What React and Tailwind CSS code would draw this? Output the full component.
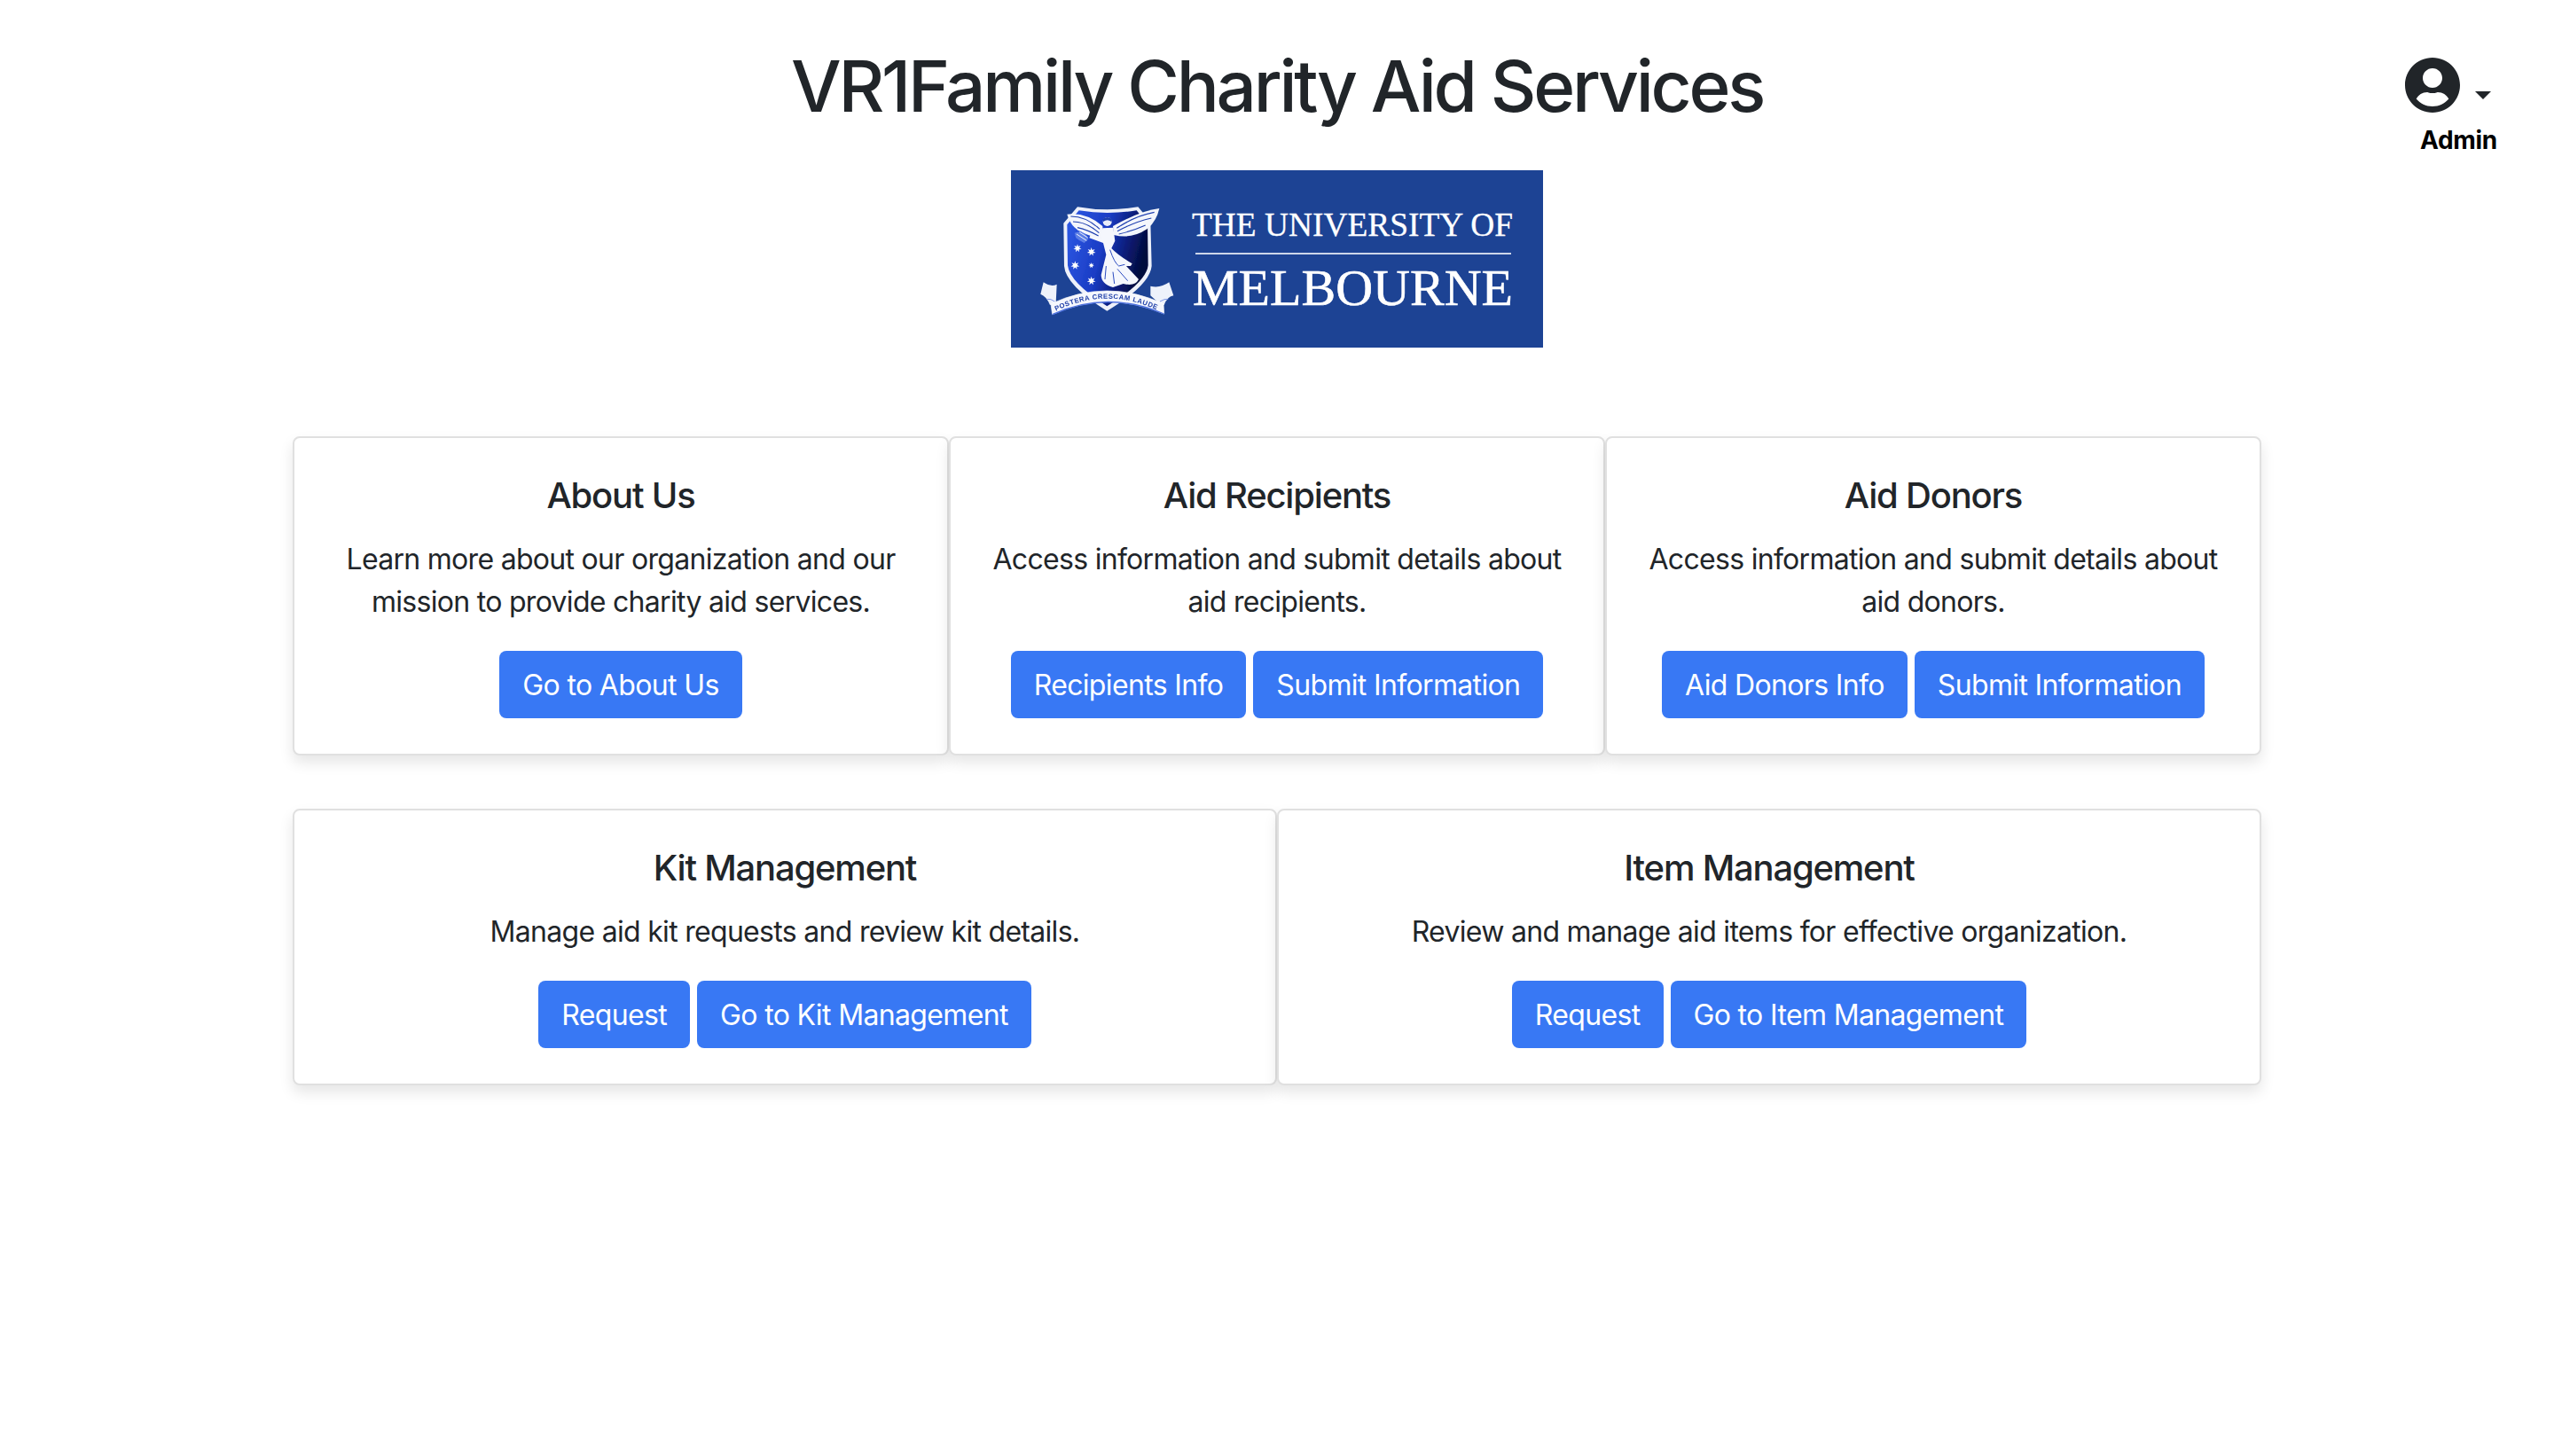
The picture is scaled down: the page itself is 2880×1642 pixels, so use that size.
import React from "react";
import { FaUserCircle } from "react-icons/fa";

const font = "font-['Inter','Liberation_Sans',sans-serif]";

function Btn({ children }) {
  return (
    <span className="inline-block h-[76px] rounded-lg bg-[#3878f4] px-[26px] pt-[1px] text-[32px] leading-[76px] tracking-[-0.65px] whitespace-nowrap text-white">
      {children}
    </span>
  );
}

function Card({ title, lines, buttons }) {
  return (
    <div className="rounded-lg border-2 border-[#e0e0e0] bg-white px-[30px] pt-[41px] pb-[40px] text-center text-[#212529] shadow-[0_8px_16px_rgba(0,0,0,0.1)]">
      <h5 className="text-[40px] leading-[48px] font-medium tracking-[-1.2px]">{title}</h5>
      <div className="mt-[24px] text-[32px] leading-[48px] tracking-[-0.7px]">
        {lines.map((l) => (
          <p key={l}>{l}</p>
        ))}
      </div>
      <div className="mt-[31px] flex justify-center gap-[8px]">
        {buttons.map((b) => (
          <Btn key={b}>{b}</Btn>
        ))}
      </div>
    </div>
  );
}

function Star({ x, y, r }) {
  const pts = [];
  for (let i = 0; i < 14; i++) {
    const a = (Math.PI * i) / 7 - Math.PI / 2;
    const rr = i % 2 === 0 ? r : r * 0.45;
    pts.push(`${x + rr * Math.cos(a)},${y + rr * Math.sin(a)}`);
  }
  return <polygon points={pts.join(" ")} fill="#fff" />;
}

function Crest() {
  return (
    <g transform="translate(20 8) scale(0.33333)" filter="url(#soft)">
      <path d="M165 100 Q265 118 370 100 L412 150 L416 300 Q410 365 265 452 Q125 365 120 300 L118 155 Z" fill="#eef1fa" />
      <path d="M170 112 Q265 128 365 112 L402 158 L404 298 Q398 355 265 436 Q138 355 132 298 L130 160 Z" fill="url(#sh)" />
      <path d="M130 125 Q195 118 250 165 L252 208 Q200 200 165 178 Q140 160 130 125 Z" fill="#f4f6fc" />
      <path d="M442 105 Q380 112 285 165 L288 195 Q350 210 400 175 Q432 150 442 105 Z" fill="#f4f6fc" />
      <path d="M142 132 Q195 132 240 175 M150 150 Q195 150 238 188 M165 170 Q200 178 236 198" stroke="#1f3fb0" strokeWidth="3.5" fill="none" />
      <path d="M425 118 Q360 130 298 172 M415 138 Q360 150 300 182 M395 162 Q350 182 305 192" stroke="#1f3fb0" strokeWidth="3.5" fill="none" />
      <circle cx="266" cy="150" r="15" fill="#e9edf9" />
      <path d="M250 142 Q266 128 282 142 L280 150 Q266 140 252 150 Z" fill="#1f3fb0" />
      <path d="M250 172 L286 170 L292 215 L280 240 Q300 262 350 292 L345 300 L330 300 L372 345 Q360 370 320 360 L285 372 Q245 360 245 330 L262 262 L252 222 L205 205 L210 192 L245 205 Z" fill="#f5f7fd" />
      <path d="M275 245 Q290 290 305 300 L325 295 M262 300 L258 345 M300 310 L335 350 M285 320 L290 360" stroke="#2a4ac0" strokeWidth="3" fill="none" />
      <path d="M155 188 L175 182 L192 192 L202 208 L188 222 L170 212 L160 205 Z" fill="#5c7ee6" />
      <path d="M162 192 L196 214 M172 186 L200 204" stroke="#f0f3fb" strokeWidth="3" />
      <Star x={165} y={240} r={14} />
      <Star x={212} y={252} r={15} />
      <Star x={157} y={298} r={15} />
      <Star x={212} y={298} r={10} />
      <Star x={212} y={350} r={15} />
      <path d="M50 355 Q75 372 95 362 L92 425 L72 432 Q60 402 40 395 Z" fill="#eef2fb" />
      <path d="M475 355 L490 400 Q470 402 458 432 L440 425 L412 400 L412 368 Q445 376 475 355 Z" fill="#eef2fb" />
      <path d="M75 428 Q265 340 456 428 L458 462 Q265 380 80 464 Z" fill="#f5f7fd" stroke="#ffffff" strokeWidth="2" />
      <path d="M80 464 Q265 380 458 462" fill="none" stroke="#4f72e0" strokeWidth="4" />
      <path d="M88 420 Q75 410 62 412 M444 420 Q460 410 472 412" fill="none" stroke="#7c96e8" strokeWidth="3" />
      <text fontFamily="'Liberation Sans',sans-serif" fontSize="23" fontWeight="bold" fill="#1f3fa8" textLength="352">
        <textPath href="#rib">POSTERA CRESCAM LAUDE</textPath>
      </text>
    </g>
  );
}

function Defs() {
  return (
    <defs>
      <linearGradient id="sh" x1="0" y1="0" x2="1" y2="0.3">
        <stop offset="0" stopColor="#2f5ae6" />
        <stop offset="0.5" stopColor="#1a3cc4" />
        <stop offset="0.78" stopColor="#0a1c78" />
        <stop offset="1" stopColor="#040c3e" />
      </linearGradient>
      <filter id="soft" x="-10%" y="-10%" width="120%" height="120%">
        <feGaussianBlur stdDeviation="1" />
      </filter>
      <path id="rib" d="M92 452 Q265 368 442 452" />
    </defs>
  );
}

function Logo() {
  return (
    <svg width="600" height="200" viewBox="0 0 600 200" className="block">
      <Defs />
      <rect width="600" height="200" fill="#1d4394" />
      <Crest />
      <text x="204" y="74" fontFamily="'Liberation Serif',serif" fontSize="38" fill="#fff" stroke="#fff" strokeWidth="0.3" textLength="362" lengthAdjust="spacingAndGlyphs">THE UNIVERSITY OF</text>
      <rect x="208" y="93" width="356" height="2" fill="#cdd6ea" />
      <text x="205" y="152" fontFamily="'Liberation Serif',serif" fontSize="58" fill="#fff" stroke="#fff" strokeWidth="0.6" textLength="361" lengthAdjust="spacingAndGlyphs">MELBOURNE</text>
    </svg>
  );
}

export default function App() {
  return (
    <div className={`relative min-h-[1642px] bg-white ${font}`}>
      <div className="absolute top-[64px] left-[2711px] flex flex-col text-[#212529]">
        <div className="flex items-end">
          <FaUserCircle className="size-[64px]" />
          <span className="mb-[16px] ml-[16px] h-0 w-0 border-x-[9px] border-t-[9px] border-x-transparent border-t-[#212529]" />
        </div>
        <span className="mt-[13px] ml-[18px] text-[28px] leading-[34px] font-bold tracking-[-0.3px] text-black">Admin</span>
      </div>
      <div className="flex flex-col items-center pt-[49px]">
        <h1 className="text-[80px] leading-[96px] font-medium tracking-[-3.25px] text-[#212529]">VR1Family Charity Aid Services</h1>
        <div className="mt-[47px]">
          <Logo />
        </div>
      </div>
      <div className="mx-auto mt-[100px] w-[2220px]">
        <div className="grid grid-cols-3">
          <Card title="About Us" lines={["Learn more about our organization and our", "mission to provide charity aid services."]} buttons={["Go to About Us"]} />
          <Card title="Aid Recipients" lines={["Access information and submit details about", "aid recipients."]} buttons={["Recipients Info", "Submit Information"]} />
          <Card title="Aid Donors" lines={["Access information and submit details about", "aid donors."]} buttons={["Aid Donors Info", "Submit Information"]} />
        </div>
        <div className="mt-[60px] grid grid-cols-2">
          <Card title="Kit Management" lines={["Manage aid kit requests and review kit details."]} buttons={["Request", "Go to Kit Management"]} />
          <Card title="Item Management" lines={["Review and manage aid items for effective organization."]} buttons={["Request", "Go to Item Management"]} />
        </div>
      </div>
    </div>
  );
}
